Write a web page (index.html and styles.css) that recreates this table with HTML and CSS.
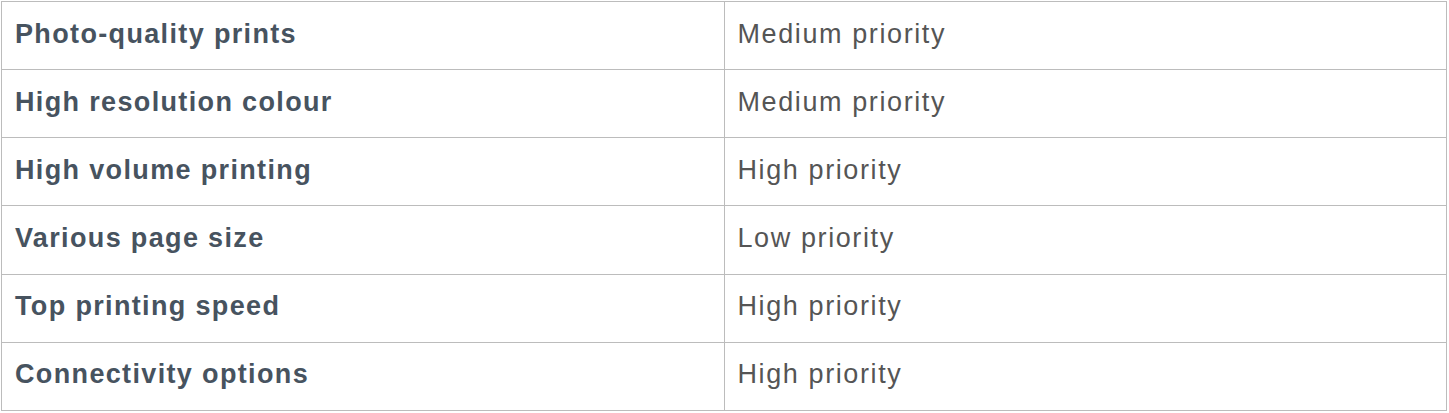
FILE: index.html
```html
<!DOCTYPE html>
<html>
<head>
<meta charset="utf-8">
<link rel="stylesheet" href="styles.css">
</head>
<body>
<table class="priorities">
  <tbody>
    <tr><th class="feature">Photo-quality prints</th><td class="level">Medium priority</td></tr>
    <tr><th class="feature">High resolution colour</th><td class="level">Medium priority</td></tr>
    <tr><th class="feature">High volume printing</th><td class="level">High priority</td></tr>
    <tr><th class="feature">Various page size</th><td class="level">Low priority</td></tr>
    <tr><th class="feature">Top printing speed</th><td class="level">High priority</td></tr>
    <tr><th class="feature">Connectivity options</th><td class="level">High priority</td></tr>
  </tbody>
</table>
</body>
</html>
```
FILE: styles.css
```css
html, body {
  background: #ffffff;
}
body {
  margin: 1px;
  font-family: "Liberation Sans", Arial, sans-serif;
}
.priorities {
  width: 1446px;
  border-collapse: collapse;
  table-layout: fixed;
}
.priorities tr {
  height: 68.17px;
}
.feature, .level {
  border: 1px solid #bcbcbc;
  padding: 0 13px 3px;
  text-align: left;
  vertical-align: middle;
  font-size: 27px;
  width: 50%;
}
.feature {
  font-weight: bold;
  color: #47535f;
  letter-spacing: 1.35px;
}
.level {
  font-weight: normal;
  color: #555555;
  letter-spacing: 1.6px;
}
```
